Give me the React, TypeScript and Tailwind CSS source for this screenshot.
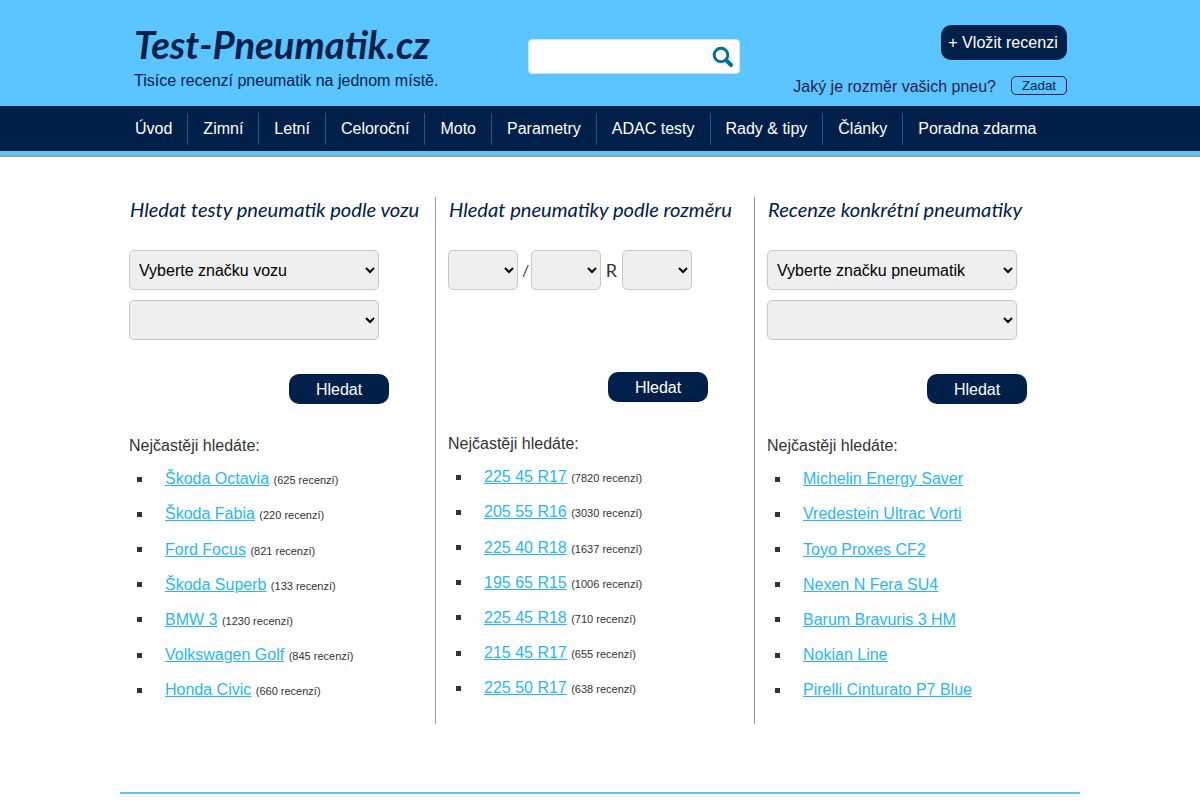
const carLinks = [
  ['Škoda Octavia', '625'],
  ['Škoda Fabia', '220'],
  ['Ford Focus', '821'],
  ['Škoda Superb', '133'],
  ['BMW 3', '1230'],
  ['Volkswagen Golf', '845'],
  ['Honda Civic', '660'],
];
const sizeLinks = [
  ['225 45 R17', '7820'],
  ['205 55 R16', '3030'],
  ['225 40 R18', '1637'],
  ['195 65 R15', '1006'],
  ['225 45 R18', '710'],
  ['215 45 R17', '655'],
  ['225 50 R17', '638'],
];
const tyreLinks = [
  'Michelin Energy Saver',
  'Vredestein Ultrac Vorti',
  'Toyo Proxes CF2',
  'Nexen N Fera SU4',
  'Barum Bravuris 3 HM',
  'Nokian Line',
  'Pirelli Cinturato P7 Blue',
];
const menu = ['Úvod', 'Zimní', 'Letní', 'Celoroční', 'Moto', 'Parametry', 'ADAC testy', 'Rady & tipy', 'Články', 'Poradna zdarma'];

function Sel({ label, w }: { label?: string; w: string }) {
  return (
    <select defaultValue="" className={`${w} h-10 rounded-[5px] border border-[#c8c8c8] bg-[#efefef] pl-[5px] font-['Liberation_Sans',Arial,sans-serif] text-base text-black`}>
      <option value="">{label}</option>
    </select>
  );
}

function Links({ items }: { items: (string | string[])[] }) {
  return (
    <ul className="mt-[5.65px]">
      {items.map((it) => {
        const [name, count] = Array.isArray(it) ? it : [it];
        return (
          <li key={name} className="h-[35.17px] flex items-center pl-2">
            <span className="w-[5px] h-[5px] bg-[#333] mr-[23px]" />
            <span>
              <a className="text-base text-[#29b6f6] underline">{name}</a>
              {count && <> <span className="text-[11px] text-[#333]">({count} recenzí)</span></>}
            </span>
          </li>
        );
      })}
    </ul>
  );
}

function Btn({ offset }: { offset: string }) {
  return (
    <div className={`${offset} w-[100px] h-[30px] pt-[2px] rounded-[10px] bg-[#00204a] text-white text-base flex items-center justify-center`}>Hledat</div>
  );
}

export default function App() {
  return (
    <div className="h-[800px] overflow-hidden bg-white font-['Liberation_Sans',Arial,sans-serif] text-[#333]">
      {/* header */}
      <div className="h-[106px] bg-[#5ac5ff]">
        <div className="w-[960px] mx-auto relative h-full pl-[14px] flex">
          <div className="w-[394px] pt-[21px]">
            <div className="font-['Lato',sans-serif] italic font-bold text-[38.25px] leading-[46px] text-[#00204a]">Test-Pneumatik.cz</div>
            <div className="text-base leading-[20px] mt-[4px] text-[#00204a]">Tisíce recenzí pneumatik na jednom místě.</div>
          </div>
          <div className="w-[212px] h-[35px] mt-[39px] bg-white rounded-[4px] border border-[#c8e4f5] flex items-center justify-end pr-[5px]">
            <svg width="22" height="22" viewBox="0 0 22 22" fill="none" stroke="#00719c">
              <circle cx="9" cy="9" r="6.8" strokeWidth="3" />
              <path d="M14.5 14.5 L19 19" strokeWidth="4" strokeLinecap="round" />
            </svg>
          </div>
          <div className="flex-1 flex flex-col items-end pr-[13px] pt-[25px]">
            <div className="h-[35px] w-[126px] pr-[2px] rounded-[10px] bg-[#00204a] text-white text-[16.1px] flex items-center justify-center">+ Vložit recenzi</div>
            <div className="mt-[14px] flex items-start text-base text-[#2a2050]">
              <span className="mt-[1px]">Jaký je rozměr vašich pneu?</span>
              <span className="ml-[15px] mt-[2px] w-[56px] h-[19px] rounded-[5px] border border-[#00204a] text-[13.33px] text-[#00204a] flex items-center justify-center">Zadat</span>
            </div>
          </div>
        </div>
      </div>
      {/* menu */}
      <div className="h-[45px] bg-[#00204a]">
        <div className="w-[960px] mx-auto flex h-full pt-[7px]">
          {menu.map((m, i) => (
            <div key={m} className={`h-[32px] px-[15px] flex items-center text-base text-white ${i > 0 ? 'border-l border-[#1a5a8a]' : ''}`}>{m}</div>
          ))}
        </div>
      </div>
      <div className="h-[6px] bg-[#5ac5ff] border-b-2 border-[#98a3ab]" />
      {/* columns */}
      <div className="w-[960px] mx-auto flex pt-[40px] pl-[9px]">
        <div className="w-[306px] h-[529px]">
          <h2 className="font-['Lato',sans-serif] italic font-normal text-[20.15px] leading-[24px] pl-[1px] text-[#00204a]">Hledat testy pneumatik podle vozu</h2>
          <div className="mt-[29px] flex flex-col gap-[10px]">
            <Sel w="w-[250px]" label="Vyberte značku vozu" />
            <Sel w="w-[250px]" />
          </div>
          <Btn offset="ml-[160px] mt-[34px]" />
          <div className="mt-[32px] text-base leading-[20px]">Nejčastěji hledáte:</div>
          <Links items={carLinks} />
        </div>
        <div className="w-[319px] h-[527px] border-l border-[#999] pl-[12px]">
          <h2 className="font-['Lato',sans-serif] italic font-normal text-[20.15px] leading-[24px] pl-[1px] text-[#00204a]">Hledat pneumatiky podle rozměru</h2>
          <div className="mt-[29px] flex items-center gap-[4px] font-['Lato',sans-serif] text-base">
            <Sel w="w-[70px]" />
            <span className="w-[5px] text-center">/</span>
            <Sel w="w-[70px]" />
            <span className="w-[13px] text-center text-[18px]">R</span>
            <Sel w="w-[70px]" />
          </div>
          <Btn offset="ml-[160px] mt-[82px]" />
          <div className="mt-[32px] text-base leading-[20px]">Nejčastěji hledáte:</div>
          <Links items={sizeLinks} />
        </div>
        <div className="flex-1 h-[527px] border-l border-[#999] pl-[12px]">
          <h2 className="font-['Lato',sans-serif] italic font-normal text-[20.15px] leading-[24px] pl-[1px] text-[#00204a]">Recenze konkrétní pneumatiky</h2>
          <div className="mt-[29px] flex flex-col gap-[10px]">
            <Sel w="w-[250px]" label="Vyberte značku pneumatik" />
            <Sel w="w-[250px]" />
          </div>
          <Btn offset="ml-[160px] mt-[34px]" />
          <div className="mt-[32px] text-base leading-[20px]">Nejčastěji hledáte:</div>
          <Links items={tyreLinks} />
        </div>
      </div>
      <div className="w-[960px] mx-auto mt-[66px] border-t-2 border-[#5ac5ff]" />
    </div>
  );
}
